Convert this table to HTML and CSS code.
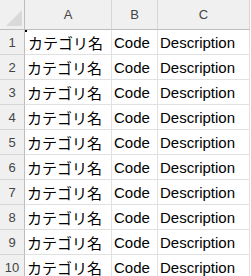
FILE: index.html
```html
<!DOCTYPE html>
<html>
<head>
<meta charset="utf-8">
<link rel="stylesheet" href="styles.css">
</head>
<body>
<div class="sheet">
  <div class="corner"><span class="tri"></span></div>
  <div class="colhead">A</div>
  <div class="colhead">B</div>
  <div class="colhead">C</div>

  <div class="rowhead">1</div><div class="cell active">カテゴリ名</div><div class="cell">Code</div><div class="cell">Description</div>
  <div class="rowhead">2</div><div class="cell">カテゴリ名</div><div class="cell">Code</div><div class="cell">Description</div>
  <div class="rowhead">3</div><div class="cell">カテゴリ名</div><div class="cell">Code</div><div class="cell">Description</div>
  <div class="rowhead">4</div><div class="cell">カテゴリ名</div><div class="cell">Code</div><div class="cell">Description</div>
  <div class="rowhead">5</div><div class="cell">カテゴリ名</div><div class="cell">Code</div><div class="cell">Description</div>
  <div class="rowhead">6</div><div class="cell">カテゴリ名</div><div class="cell">Code</div><div class="cell">Description</div>
  <div class="rowhead">7</div><div class="cell">カテゴリ名</div><div class="cell">Code</div><div class="cell">Description</div>
  <div class="rowhead">8</div><div class="cell">カテゴリ名</div><div class="cell">Code</div><div class="cell">Description</div>
  <div class="rowhead">9</div><div class="cell">カテゴリ名</div><div class="cell">Code</div><div class="cell">Description</div>
  <div class="rowhead">10</div><div class="cell">カテゴリ名</div><div class="cell">Code</div><div class="cell">Description</div>
</div>
</body>
</html>
```
FILE: styles.css
```css
html, body {
  margin: 0;
  padding: 0;
  background: #ffffff;
  overflow: hidden;
}

.sheet {
  display: grid;
  grid-template-columns: 25px 87px 46px 92px;
  grid-template-rows: 30px repeat(10, 25px);
  width: 250px;
  font-family: "Liberation Sans", "Noto Sans CJK JP", sans-serif;
}

.sheet > div {
  box-sizing: border-box;
  display: flex;
  align-items: center;
  white-space: nowrap;
  overflow: hidden;
}

.corner {
  position: relative;
  background: #f0f0f0;
  border-right: 1px solid #bdbdbd;
  border-bottom: 1px solid #bdbdbd;
}

.tri {
  position: absolute;
  right: 2px;
  bottom: 3px;
  width: 0;
  height: 0;
  border-left: 16px solid transparent;
  border-bottom: 16px solid #d9d9d9;
}

.colhead {
  justify-content: center;
  background: #f0f0f0;
  color: #444444;
  font-size: 13px;
  border-right: 1px solid #d6d6d6;
  border-bottom: 1px solid #bdbdbd;
}

.rowhead {
  justify-content: center;
  background: #f0f0f0;
  color: #444444;
  font-size: 13px;
  border-right: 1px solid #bdbdbd;
  border-bottom: 1px solid #d6d6d6;
}

.cell {
  padding-left: 2px;
  color: #000000;
  font-size: 15px;
  border-right: 1px solid #e1e1e1;
  border-bottom: 1px solid #e1e1e1;
}

.cell.active {
  position: relative;
  padding-left: 3px;
}

.cell.active::before {
  content: "";
  position: absolute;
  left: 0;
  top: 0;
  width: 2px;
  height: 2px;
  background: #000000;
}
```
